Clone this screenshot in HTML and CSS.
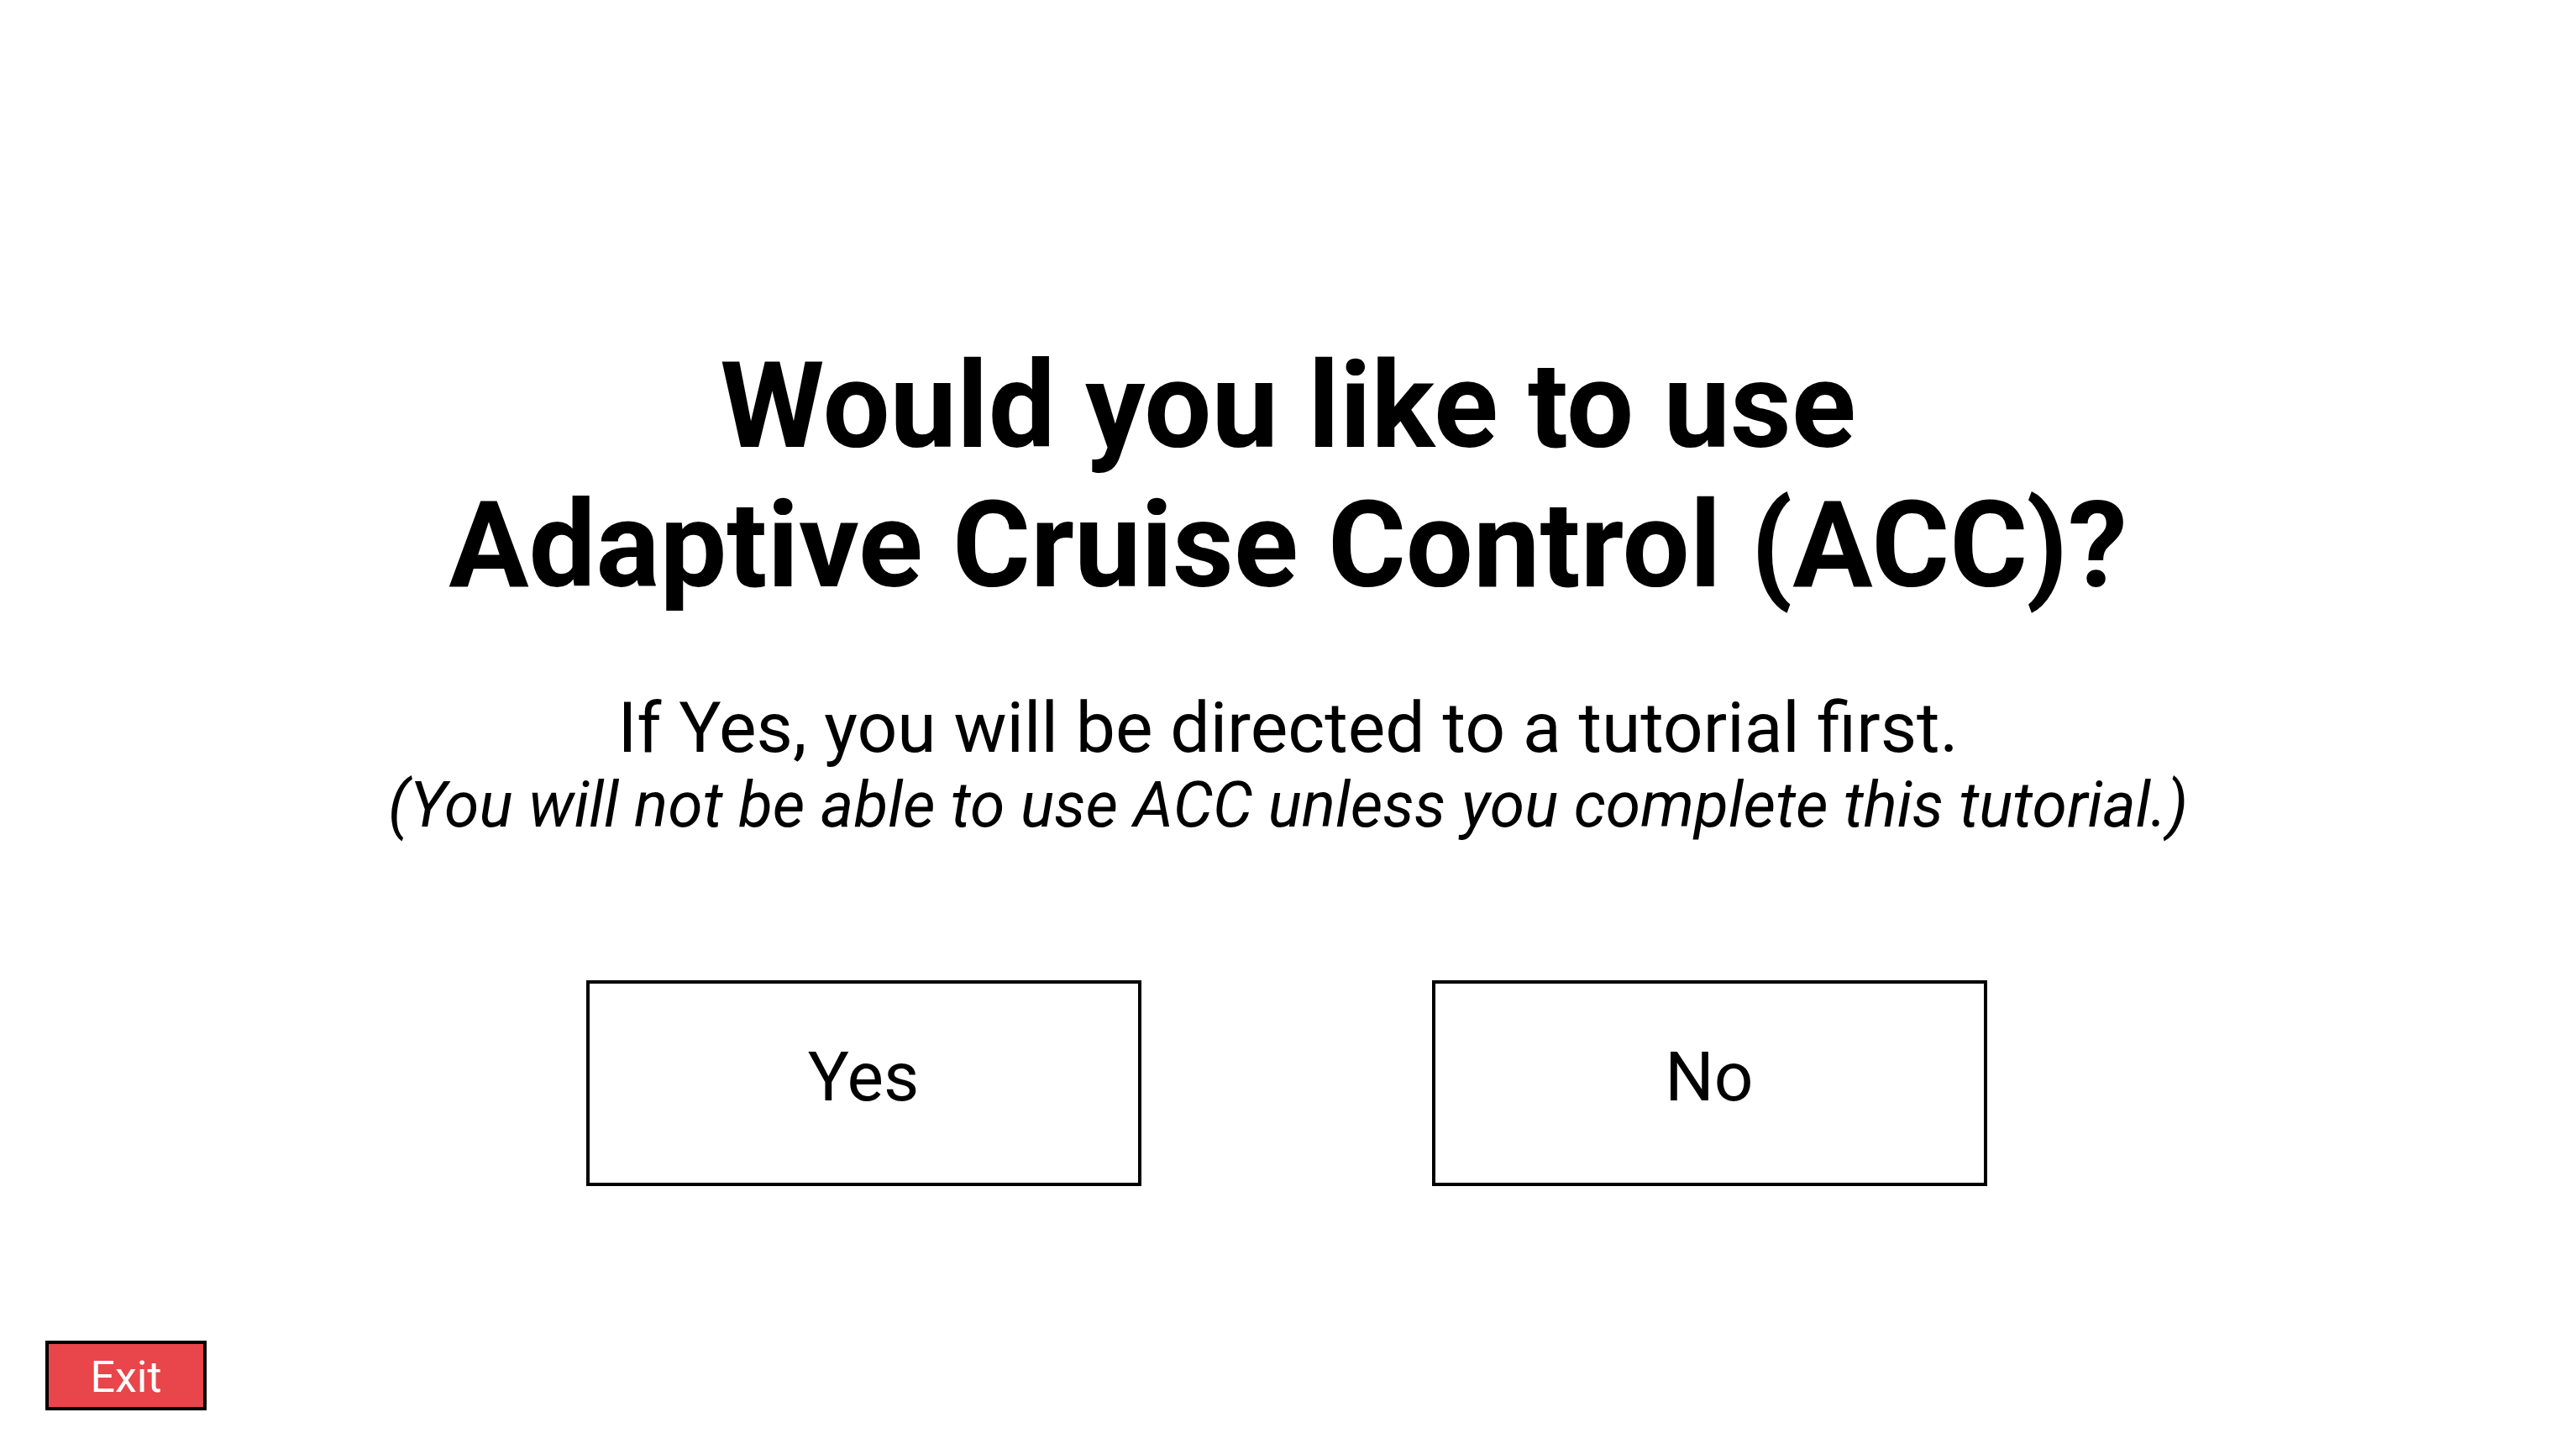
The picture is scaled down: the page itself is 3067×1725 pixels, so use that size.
FILE: index.html
```html
<!DOCTYPE html>
<html lang="en">
<head>
<meta charset="utf-8">
<title>ACC</title>
<link rel="stylesheet" href="styles.css">
</head>
<body>
<main class="screen">
  <h1 class="title">Would you like to use<br>Adaptive Cruise Control (ACC)?</h1>
  <p class="sub">If Yes, you will be directed to a tutorial first.</p>
  <p class="note">(You will not be able to use ACC unless you complete this tutorial.)</p>
  <div class="choices">
    <button class="choice">Yes</button>
    <button class="choice">No</button>
  </div>
</main>
<button class="exit">Exit</button>
</body>
</html>
```
FILE: styles.css
```css
html, body {
  margin: 0;
  padding: 0;
  background: #fff;
}
body {
  width: 3067px;
  height: 1725px;
  overflow: hidden;
  font-family: Roboto, "Liberation Sans", sans-serif;
  color: #000;
}
.screen {
  display: flex;
  flex-direction: column;
  align-items: center;
  padding-top: 401px;
}
.title {
  margin: 0;
  font-size: 142px;
  font-weight: 700;
  line-height: 166px;
  text-align: center;
}
.sub {
  margin: 88px 0 0;
  font-size: 84px;
  font-weight: 400;
  line-height: 92px;
  text-align: center;
}
.note {
  margin: 0;
  font-size: 75px;
  font-style: italic;
  line-height: 90px;
  text-align: center;
}
.choices {
  display: flex;
  gap: 346px;
  margin-top: 164px;
  margin-left: -4px;
}
.choice {
  box-sizing: border-box;
  width: 661px;
  height: 245px;
  border: 4px solid #000;
  background: #fff;
  font-family: Roboto, "Liberation Sans", sans-serif;
  font-size: 82px;
  color: #000;
  padding: 0 0 16px;
  cursor: pointer;
}
.exit {
  position: fixed;
  left: 54px;
  bottom: 46px;
  box-sizing: border-box;
  width: 192px;
  height: 83px;
  border: 4px solid #000;
  background: #e8464a;
  color: #fff;
  font-family: Roboto, "Liberation Sans", sans-serif;
  font-size: 52px;
  padding: 4px 0 0;
  cursor: pointer;
}
```
